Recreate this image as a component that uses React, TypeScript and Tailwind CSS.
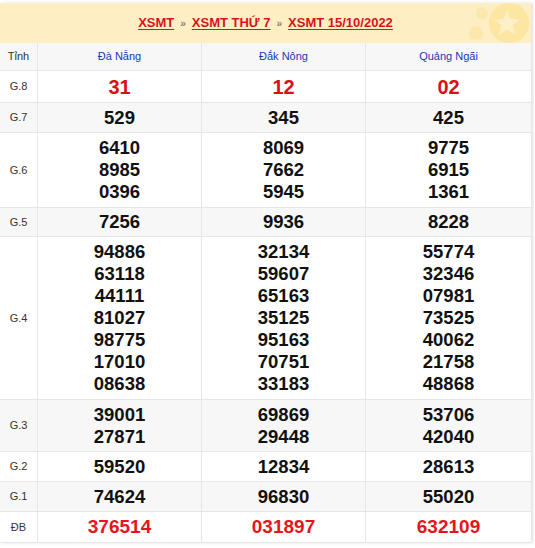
import React from "react";

type Row = { label: string; vals: string[][]; kind?: "g8" | "db"; h: string };

const rows: Row[] = [
  { label: "G.8", vals: [["31"], ["12"], ["02"]], kind: "g8", h: "h-[32px]" },
  { label: "G.7", vals: [["529"], ["345"], ["425"]], h: "h-[30px]" },
  {
    label: "G.6",
    vals: [
      ["6410", "8985", "0396"],
      ["8069", "7662", "5945"],
      ["9775", "6915", "1361"],
    ],
    h: "h-[75px]",
  },
  { label: "G.5", vals: [["7256"], ["9936"], ["8228"]], h: "h-[29px]" },
  {
    label: "G.4",
    vals: [
      ["94886", "63118", "44111", "81027", "98775", "17010", "08638"],
      ["32134", "59607", "65163", "35125", "95163", "70751", "33183"],
      ["55774", "32346", "07981", "73525", "40062", "21758", "48868"],
    ],
    h: "h-[163px]",
  },
  {
    label: "G.3",
    vals: [
      ["39001", "27871"],
      ["69869", "29448"],
      ["53706", "42040"],
    ],
    h: "h-[52px]",
  },
  { label: "G.2", vals: [["59520"], ["12834"], ["28613"]], h: "h-[30px]" },
  { label: "G.1", vals: [["74624"], ["96830"], ["55020"]], h: "h-[30px]" },
  { label: "ĐB", vals: [["376514"], ["031897"], ["632109"]], kind: "db", h: "h-[31px]" },
];

function Star() {
  return (
    <svg className="absolute right-[2px] top-[0px]" width="72" height="42" viewBox="0 0 72 42">
      <circle cx="52" cy="20" r="20" fill="#fde5a2" />
      <path
        d="M50 7 L53.5 16 L63 16.5 L55.5 22.5 L58.5 32 L50 26.5 L41.5 32 L44.5 22.5 L37 16.5 L46.5 16 Z"
        fill="#fdefc8"
      />
      <circle cx="25" cy="10" r="6" fill="#fce8ad" />
      <circle cx="19" cy="30" r="7" fill="#fce8ad" />
    </svg>
  );
}

export default function App() {
  return (
    <div className="w-[535px] h-[548px] bg-white pt-[3px]" style={{ fontFamily: "Arial, 'Liberation Sans', sans-serif" }}>
      <div className="w-[531px] bg-white shadow-[2px_0_3px_rgba(0,0,0,0.12)]">
        <div className="relative h-[40px] bg-[#fdefc3] flex items-center justify-center overflow-hidden">
          <Star />
          <div className="relative flex items-center gap-[6px] text-[13px] font-bold text-[#d8141b]">
            <span className="underline underline-offset-2">XSMT</span>
            <span className="text-[#555] text-[10px] font-normal">»</span>
            <span className="underline underline-offset-2">XSMT THỨ 7</span>
            <span className="text-[#555] text-[10px] font-normal">»</span>
            <span className="underline underline-offset-2">XSMT 15/10/2022</span>
          </div>
        </div>
        <div className="grid grid-cols-[38px_164px_164px_165px] h-[28px] bg-[#f7f7f7] border-b border-[#e6e6e6] text-[11px]">
          <div className="flex items-center justify-center text-[#333] border-r border-[#e6e6e6]">Tỉnh</div>
          <div className="flex items-center justify-center text-[#1b36b8] border-r border-[#e6e6e6]">Đà Nẵng</div>
          <div className="flex items-center justify-center text-[#1b36b8] border-r border-[#e6e6e6]">Đắk Nông</div>
          <div className="flex items-center justify-center text-[#1b36b8]">Quảng Ngãi</div>
        </div>
        {rows.map((r, i) => (
          <div
            key={r.label}
            className={`grid grid-cols-[38px_164px_164px_165px] ${r.h} border-b border-[#e6e6e6] ${i % 2 === 1 ? "bg-[#f7f7f7]" : "bg-white"}`}
          >
            <div className="flex items-center justify-center text-[11px] text-[#333] border-r border-[#e6e6e6]">{r.label}</div>
            {r.vals.map((v, j) => (
              <div
                key={j}
                className={`flex flex-col items-center justify-center font-bold leading-[22px] ${j < 2 ? "border-r border-[#e6e6e6]" : ""} ${
                  r.kind === "g8"
                    ? "text-[20px] text-[#d41317]"
                    : r.kind === "db"
                    ? "text-[19px] text-[#e8141b]"
                    : "text-[18.5px] text-[#111]"
                }`}
              >
                {v.map((n) => (
                  <span key={n}>{n}</span>
                ))}
              </div>
            ))}
          </div>
        ))}
      </div>
    </div>
  );
}
